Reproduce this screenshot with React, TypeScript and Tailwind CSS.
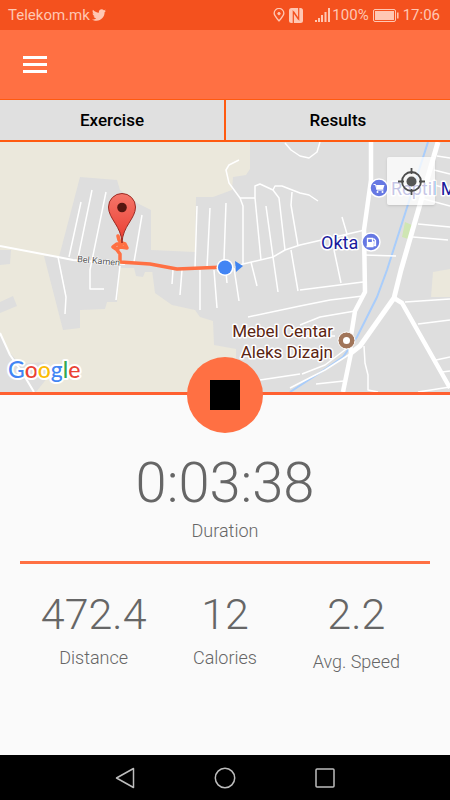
import React, { useState } from "react";
import { FaTwitter } from "react-icons/fa";

type Tab = "Exercise" | "Results";

type Stat = {
  label: string;
  value: string;
  labelClass: string;
};

const TABS: Tab[] = ["Exercise", "Results"];

const STATS: Stat[] = [
  { label: "Distance", value: "472.4", labelClass: "mt-2" },
  { label: "Calories", value: "12", labelClass: "mt-2" },
  { label: "Avg. Speed", value: "2.2", labelClass: "mt-3" },
];

// Land use
const FIELDS = [
  "M0 142H250V169L246 175L233 177L232 190L213 197H196L195 253H152V270L155 293L172 305L195 310L200 317L213 321L214 345L236 349V392H0Z",
  "M433 272L450 269V297H431Z",
];

const BLOCKS = [
  "M80 177L117 180L120 190L137 203L151 210V250L195 252V272H145L143 277L136 276L134 268H120L117 302H107L105 309L80 310V328L63 330L44 256L59 257Z",
  "M0 250H11L10 264L0 265Z",
  "M0 302L13 296L17 306L0 313Z",
  "M0 335L10 353L20 364L44 362L48 377L36 392H0Z",
];

// Streets
const STREETS = [
  "M81 202L69 257M92 190L78 258M106 192L90 270V289H104M142 215L134 262M120 266L116 300",
  "M58 257L66 297L65 314",
  "M239 160L229 165L226 170L229 183L240 198L243 206V264M240 198H255",
  "M255 198V186L260 184L273 190L279 198L285 250M273 190L275 186H282L300 193L309 195L318 201",
  "M255 198L261 260M266 206L273 257L278 292M292 192L291 205L298 246",
  "M197 206L195 268M210 208L207 268M226 203L224 260",
  "M285 143L291 150L300 156L309 158L317 152L320 142",
  "M235 267L243 264L273 257L285 250L300 245L365 230",
  "M173 270L172 284M182 270L180 295M200 270V310M214 270L217 308M226 272L227 283M234 268L239 301M251 262L257 286M291 250L298 291",
  "M248 317L300 306L330 300L363 296M342 217L347 234M334 250L341 283M364 255L396 256",
  "M437 156L450 158M434 170L450 174M430 184L450 189M424 199L450 206M418 224L450 227M413 237L448 240",
  "M300 290L363 282M300 325L320 317L355 311M405 302L450 299M418 324L450 320M436 360L450 357M442 372L450 371",
  "M364 346L365 363L368 375V390L378 392M418 392L450 387M316 384L344 381M302 374L325 365L350 346M260 380L300 374M290 388L325 370L350 354M300 336H335",
];

const StatusBar: React.FC = () => (
  <div className="flex h-[30px] items-center justify-between bg-[#f4511e] pl-2 pr-[10px] text-[15px] text-[#ffc7b3]">
    <div className="flex items-center gap-[2px]">
      <span>Telekom.mk</span>
      <FaTwitter className="size-[14px]" />
    </div>
    <div className="flex items-center">
      <svg className="h-[14px] w-[12px]" viewBox="0 0 12 15" fill="none" stroke="currentColor">
        <path d="M6 13.8C3.5 10.6 .8 8.6 .8 5.7a5.2 5.2 0 0 1 10.4 0C11.200 8.600 8.500 10.600 6 13.800Z" strokeWidth="1.400" />
        <circle cx="6" cy="6" r="1.300" fill="currentColor" />
      </svg>
      <svg className="ml-1 h-[15px] w-[14px]" viewBox="0 0 14 15">
        <rect width="14" height="15" rx="2.500" fill="currentColor" />
        <path d="M4.300 15V4L9.500 11.500M9.700 0V11L4.500 3.500" stroke="#f4511e" strokeWidth="1.200" fill="none" />
      </svg>
      <svg className="ml-3 h-[14px] w-[15px]" viewBox="0 0 15 14" fill="currentColor">
        <path d="M0 12h2v2H0zM3 10h2v4H3zM6 7h2v7H6zM9.500 4h2v10h-2zM13 0h2v14h-2z" />
      </svg>
      <span className="ml-[2px]">100%</span>
      <svg className="ml-1 h-[13px] w-[26px]" viewBox="0 0 26 13" fill="none">
        <rect x=".5" y=".5" width="22" height="12" rx="1.500" stroke="currentColor" />
        <rect x="2" y="2" width="19" height="9" fill="currentColor" />
        <path d="M24.800 3.500V9.500" stroke="currentColor" strokeWidth="1.500" />
      </svg>
      <span className="ml-1">17:06</span>
    </div>
  </div>
);

const RouteMap: React.FC = () => (
  <svg
    className="block h-[250px] w-full"
    viewBox="0 142 450 250"
    preserveAspectRatio="xMidYMid slice"
    role="img"
    aria-label="Route map"
  >
    <rect y="142" width="450" height="250" fill="#dedede" />
    {FIELDS.map((d) => (
      <path key={d} d={d} fill="#ebe8dc" />
    ))}
    {BLOCKS.map((d) => (
      <path key={d} d={d} fill="#dedede" />
    ))}
    <path d="M405 222L412 225L408 239L402 237Z" fill="#cfe6b3" />
    <path d="M428 142L387 270L377 297L357 337L343 357L327 368L290 392" fill="none" stroke="#a9cdfb" strokeWidth="2" />

    <g fill="none" stroke="#fff" strokeLinejoin="round">
      {STREETS.map((d) => (
        <path key={d} d={d} strokeWidth="1.500" />
      ))}
      <path d="M0 246L58 257L73 260L125 264M0 333L10 355L22 372L34 392" strokeWidth="2" />
      <path d="M371 142V180L364 230L365 292L355 311L350 342L351 353L343 392" strokeWidth="4.500" />
      <path d="M438 142L401 270L394 298L360 346L351 353" strokeWidth="5" />
      <path d="M394 298L402 303L450 388" strokeWidth="4.500" />
    </g>

    {/* Tracked route */}
    <path
      d="M118 236L119 240L122 244L117 244L113 247L116 249L121 247L127 248L125 244L122 243L117 250L120 254V262L150 264L177 269L225 267"
      fill="none"
      stroke="#ff7043"
      strokeWidth="3.500"
      strokeLinejoin="round"
      strokeLinecap="round"
    />

    <g fontFamily="Roboto, sans-serif" stroke="#fff" strokeWidth="3" strokeLinejoin="round" paintOrder="stroke">
      <text x="77" y="262" fontSize="9" fill="#555" strokeWidth="1" transform="rotate(5 77 262)">
        Bel Kamen
      </text>
      <g fontSize="18" fill="#1a1a9c">
        <text x="321" y="249">Okta</text>
        <text x="391" y="195">Reptil M</text>
      </g>
      <g fontSize="17" fill="#5a2411" textAnchor="end">
        <text x="333" y="337">Mebel Centar</text>
        <text x="333" y="358">Aleks Dizajn</text>
      </g>
    </g>

    {/* Places */}
    <circle cx="379" cy="188" r="9" fill="#6678e3" stroke="#fff" strokeWidth="1.500" />
    <path d="M373.500 184.500H375.500L377 190H383.500" fill="none" stroke="#fff" />
    <path d="M376 185H384.500L383 189.500H377.200Z" fill="#fff" />
    <circle cx="377.500" cy="192" r="1" fill="#fff" />
    <circle cx="382.500" cy="192" r="1" fill="#fff" />
    <circle cx="371" cy="242" r="9" fill="#6678e3" stroke="#fff" strokeWidth="1.500" />
    <path d="M367.500 246.500V238.500h5v8zM366.500 246.500h7M372.500 242h1.500v3.500h1.500v-5l-2-2" fill="none" stroke="#fff" strokeWidth="1.300" />
    <path d="M368 242h4v4h-4z" fill="#fff" />
    <circle cx="346.500" cy="340.500" r="8.500" fill="#a1755a" stroke="#fff" />
    <circle cx="346.500" cy="340.500" r="3.500" fill="#fff" />

    {/* Current position and start pin */}
    <path d="M235 261L243 266L236 272Z" fill="#3f84f0" />
    <circle cx="225" cy="267.500" r="8.500" fill="#fff" />
    <circle cx="225" cy="267.500" r="7" fill="#4285f4" />
    <defs>
      <linearGradient id="pin" x1="0" y1="0" x2="0" y2="1">
        <stop offset="0" stopColor="#f5766a" />
        <stop offset="1" stopColor="#e93a2e" />
      </linearGradient>
    </defs>
    <path
      d="M122 243C121.500 226 108.500 219 108.500 207a13.500 13.500 0 0 1 27 0C135.500 219 122.500 226 122 243Z"
      fill="url(#pin)"
      stroke="#9b2a22"
    />
    <circle cx="122" cy="207.500" r="4.800" fill="#561610" />

    <text
      x="8"
      y="378"
      fontFamily="Lato, sans-serif"
      fontSize="23"
      fontWeight="500"
      stroke="#fff"
      strokeWidth="4"
      strokeLinejoin="round"
      paintOrder="stroke"
    >
      <tspan fill="#4285f4">G</tspan>
      <tspan fill="#ea4335">o</tspan>
      <tspan fill="#fbbc05">o</tspan>
      <tspan fill="#4285f4">g</tspan>
      <tspan fill="#34a853">l</tspan>
      <tspan fill="#ea4335">e</tspan>
    </text>
  </svg>
);

const App: React.FC = () => {
  const [activeTab, setActiveTab] = useState<Tab>("Exercise");
  const [isRunning, setIsRunning] = useState(true);

  return (
    <div className="flex min-h-screen w-full flex-col bg-[#fafafa] font-['Roboto',sans-serif]">
      <StatusBar />
      <header className="flex h-[69px] items-center bg-[#ff7043] px-[23px]">
        <button type="button" aria-label="Menu" className="flex w-6 cursor-pointer flex-col gap-1">
          <span className="h-[3px] bg-white" />
          <span className="h-[3px] bg-white" />
          <span className="h-[3px] bg-white" />
        </button>
      </header>
      <div className="grid grid-cols-2 gap-[2px] border-b-2 border-t border-[#ff5a10] bg-[#ff5a10]">
        {TABS.map((tab) => (
          <button
            key={tab}
            type="button"
            aria-pressed={activeTab === tab}
            onClick={() => setActiveTab(tab)}
            className="h-10 cursor-pointer bg-[#e0e0e0] pt-[2px] text-[17px] font-medium text-black"
          >
            {tab}
          </button>
        ))}
      </div>

      <div className="relative border-b-[3px] border-[#ff6030]">
        <RouteMap />
        <button
          type="button"
          aria-label="My location"
          className="absolute right-[15px] top-[15px] flex size-12 cursor-pointer items-center justify-center rounded-[2px] bg-white/75 shadow"
        >
          <svg className="size-[27px]" viewBox="0 0 27 27" fill="none" stroke="#4d4d4d" strokeWidth="1.800">
            <circle cx="13.500" cy="13.500" r="9.500" />
            <circle cx="13.500" cy="13.500" r="5" fill="#555" stroke="none" />
            <path d="M13.500 0V6M13.500 21V27M0 13.500H6M21 13.500H27" />
          </svg>
        </button>
      </div>

      <main className="flex flex-1 flex-col items-center text-[#666]">
        <button
          type="button"
          aria-label={isRunning ? "Stop" : "Start"}
          onClick={() => setIsRunning((prev) => !prev)}
          className="relative -mt-[38px] flex size-[76px] cursor-pointer items-center justify-center rounded-full bg-[#ff7043]"
        >
          <span className="size-[30px] bg-black" />
        </button>
        <div className="mt-[18px] text-[56px] font-light leading-[64px]">0:03:38</div>
        <div className="mt-1 text-lg font-light leading-6">Duration</div>
        <div className="mt-[18px] w-full px-5">
          <div className="h-[3px] bg-[#ff7043]" />
        </div>
        <div className="mt-[26px] grid w-full grid-cols-3 px-7">
          {STATS.map((stat) => (
            <div key={stat.label} className="text-center font-light">
              <div className="text-[43px] leading-[48px]">{stat.value}</div>
              <div className={`text-lg leading-6 ${stat.labelClass}`}>{stat.label}</div>
            </div>
          ))}
        </div>
      </main>

      <nav className="flex h-[45px] items-center justify-center gap-[76px] bg-black text-[#bdbdbd]">
        <button type="button" aria-label="Back" className="cursor-pointer">
          <svg className="size-6" viewBox="0 0 24 24" fill="none" stroke="currentColor" strokeWidth="1.500" strokeLinejoin="round">
            <path d="M20.500 2.500V21.500L3.500 12Z" />
          </svg>
        </button>
        <button type="button" aria-label="Home" className="cursor-pointer">
          <svg className="size-6" viewBox="0 0 24 24" fill="none" stroke="currentColor" strokeWidth="1.500">
            <circle cx="12" cy="12" r="9.700" />
          </svg>
        </button>
        <button type="button" aria-label="Recent apps" className="cursor-pointer">
          <svg className="size-6" viewBox="0 0 24 24" fill="none" stroke="currentColor" strokeWidth="1.500">
            <rect x="3" y="3" width="18" height="18" rx="1" />
          </svg>
        </button>
      </nav>
    </div>
  );
};

export default App;
